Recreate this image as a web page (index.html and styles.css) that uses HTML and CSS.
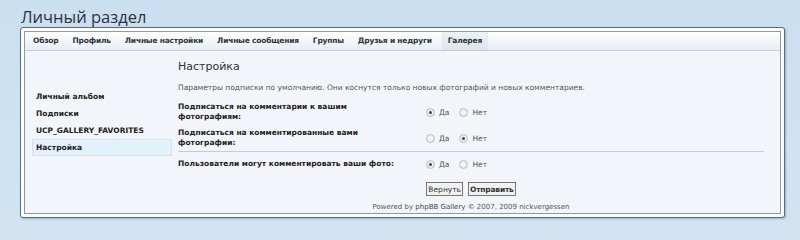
FILE: index.html
```html
<!DOCTYPE html>
<html lang="ru">
<head>
    <meta charset="UTF-8">
    <title>Личный раздел</title>
    <link rel="stylesheet" href="styles.css">
</head>
<body>
    <div class="page">
        <h1>Личный раздел</h1>
        <div class="panel">
            <div class="inner">
                <ul class="tabs">
                    <li>Обзор</li>
                    <li>Профиль</li>
                    <li>Личные настройки</li>
                    <li>Личные сообщения</li>
                    <li>Группы</li>
                    <li>Друзья и недруги</li>
                    <li class="active">Галерея</li>
                </ul>
                <div class="content">
                    <ul class="nav">
                        <li>Личный альбом</li>
                        <li>Подписки</li>
                        <li>UCP_GALLERY_FAVORITES</li>
                        <li class="current">Настройка</li>
                    </ul>
                    <div class="main">
                        <h2>Настройка</h2>
                        <p class="desc">Параметры подписки по умолчанию. Они коснутся только новых фотографий и новых комментариев.</p>
                        <div class="row">
                            <div class="label">Подписаться на комментарии к вашим фотографиям:</div>
                            <div class="opts">
                                <span class="radio on"></span><span class="opt">Да</span>
                                <span class="radio"></span><span class="opt">Нет</span>
                            </div>
                        </div>
                        <div class="row">
                            <div class="label">Подписаться на комментированные вами фотографии:</div>
                            <div class="opts">
                                <span class="radio"></span><span class="opt">Да</span>
                                <span class="radio on"></span><span class="opt">Нет</span>
                            </div>
                        </div>
                        <hr>
                        <div class="row single">
                            <div class="label">Пользователи могут комментировать ваши фото:</div>
                            <div class="opts">
                                <span class="radio on"></span><span class="opt">Да</span>
                                <span class="radio"></span><span class="opt">Нет</span>
                            </div>
                        </div>
                        <div class="buttons">
                            <button class="btn">Вернуть</button>
                            <button class="btn primary">Отправить</button>
                        </div>
                        <p class="copyright">Powered by <span class="brand">phpBB Gallery</span> © 2007, 2009 nickvergessen</p>
                    </div>
                </div>
            </div>
        </div>
    </div>
</body>
</html>
```

FILE: styles.css
```css
body {
    margin: 0;
    height: 240px;
    background: linear-gradient(#cadff0, #d2e4f2);
    font-family: "DejaVu Sans", Verdana, sans-serif;
    font-size: 7.5px;
    color: #333;
}

.page {
    padding: 7px 15px 0 20px;
}

h1 {
    margin: 0 0 0 1px;
    height: 20px;
    font-family: "Open Sans", "DejaVu Sans", sans-serif;
    font-size: 16.5px;
    font-weight: normal;
    line-height: 20px;
    color: #2a3440;
}

.panel {
    border: 1px solid #5d6b78;
    border-radius: 3px;
    padding: 3px;
    background: #fbfdfe;
    box-shadow: 1px 1px 2px rgba(60, 80, 100, 0.35);
}

.inner {
    border: 1px solid #8d9aa6;
    background: #f2f6fb;
    height: 181px;
}

.tabs {
    display: flex;
    margin: 0;
    padding: 0 0 0 3px;
    list-style: none;
    height: 18px;
    background: linear-gradient(#ffffff, #e6eef5);
    border-bottom: 1px solid #c3ced8;
}

.tabs li {
    padding: 0 9px 0 5px;
    line-height: 18px;
    font-weight: bold;
    letter-spacing: -0.2px;
    color: #2c3540;
}

.tabs li.active {
    margin-left: 1px;
    padding: 0 5px;
    background: linear-gradient(#eef2f6, #dde5ec);
    border-left: 1px solid #e3e9ef;
    border-right: 1px solid #e3e9ef;
}

.content {
    display: flex;
}

.nav {
    width: 140px;
    margin: 0 0 0 7px;
    padding: 37px 0 0;
    list-style: none;
}

.nav li {
    height: 17px;
    line-height: 17px;
    padding-left: 4px;
    font-weight: bold;
    color: #222;
}

.nav li.current {
    background: #e3f1fa;
    border: 1px solid #d2e3ee;
    height: 15px;
    line-height: 15px;
    padding-left: 3px;
}

.main {
    flex: 1;
    padding: 0 16px 0 6px;
}

h2 {
    margin: 9px 0 0;
    font-size: 11px;
    font-weight: normal;
    line-height: 14px;
    color: #2a3440;
}

.desc {
    margin: 9px 0 6px;
    line-height: 10px;
    color: #555;
}

.row {
    display: flex;
    align-items: center;
    min-height: 26px;
}

.row .label {
    width: 225px;
    margin-right: 23px;
    font-weight: bold;
    line-height: 10px;
    color: #222;
}

.opts {
    display: flex;
    align-items: center;
    color: #555;
}

.radio {
    width: 7px;
    height: 7px;
    border: 1px solid #b8bfc6;
    border-radius: 50%;
    background: radial-gradient(#fafafa, #dde1e5);
    margin-right: 4px;
    position: relative;
}

.radio.on::after {
    content: "";
    position: absolute;
    left: 2px;
    top: 2px;
    width: 3px;
    height: 3px;
    border-radius: 50%;
    background: #444;
}

.opt {
    margin-right: 10px;
}

hr {
    margin: 0 0 5px;
    border: 0;
    border-top: 1px solid #c6ccd2;
}

.row.single {
    min-height: 14px;
}

.buttons {
    display: flex;
    justify-content: center;
    gap: 5px;
    margin: 11px 0 0;
}

.btn {
    font-family: "DejaVu Sans", Verdana, sans-serif;
    font-size: 7.5px;
    height: 14px;
    padding: 0 1px;
    border: 1px solid #777;
    background: #f1f1f1;
    color: #333;
}

.btn.primary {
    font-weight: bold;
    letter-spacing: -0.2px;
}

.copyright {
    margin: 7px 0 0;
    text-align: center;
    color: #555;
    font-size: 7px;
}

.brand {
    color: #3a4450;
}
```
